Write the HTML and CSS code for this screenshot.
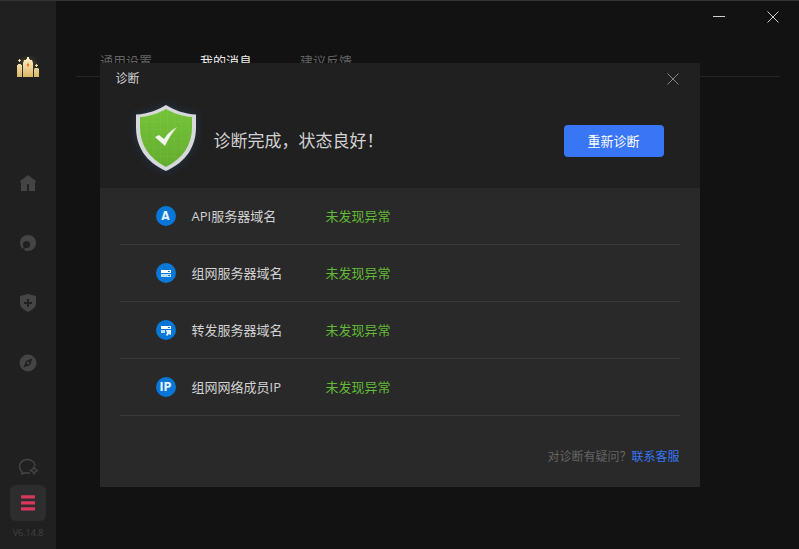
FILE: index.html
```html
<!DOCTYPE html>
<html lang="zh-CN">
<head>
<meta charset="utf-8">
<meta name="viewport" content="width=device-width, initial-scale=1">
<title>诊断</title>
<link rel="stylesheet" href="styles.css">
</head>
<body>
<div class="app">
  <nav class="sidebar" aria-label="主导航">
    <svg class="brand" viewBox="0 0 24 24" aria-hidden="true">
      <defs>
        <linearGradient id="wax" x1="0" y1="0" x2="0" y2="1"><stop offset="0" stop-color="#fff4cf"/><stop offset="1" stop-color="#d9b665"/></linearGradient>
        <radialGradient id="glow"><stop offset="0" stop-color="#a08a50" stop-opacity=".4"/><stop offset="1" stop-color="#a08a50" stop-opacity="0"/></radialGradient>
      </defs>
      <circle cx="12" cy="10" r="12" fill="url(#glow)"/>
      <path fill="url(#wax)" d="M7 21V7l1-3h2V3h1V1h2v2h1v1h2l1 3v14zM1 21V9h1V8h3v1h1v12zM18 21v-8l1-1h3l1 1v8z"/>
      <path fill="#e9d9a0" d="M3 3h1v1h1v1H4v1H3V5H2V4h1zM20 8h1v1h1v1h-1v1h-1v-1h-1V9h1z"/>
      <path fill="#f8cf7e" d="M12 5l1 3 2 1-2 1-1 3-1-3-2-1 2-1z"/>
      <path fill="#ef5c20" d="M12 7l1 2-1 2-1-2z"/>
    </svg>
    <div class="nav-group">
      <button type="button" aria-label="首页"><svg viewBox="0 0 20 20"><path fill="currentColor" d="M10 2l8 6v1h-1v9h-6v-7H9v7H3V9H2V8z"/></svg></button>
      <button type="button" aria-label="加速"><svg viewBox="0 0 20 20"><circle cx="10" cy="10" r="8" fill="currentColor"/><circle cx="8.500" cy="11.500" r="3.600" fill="#202020"/><path stroke="#202020" stroke-width="1.500" d="M7 13.500l-2.500 4.500"/></svg></button>
      <button type="button" aria-label="防护"><svg viewBox="0 0 20 20"><path fill="currentColor" fill-rule="evenodd" d="M10 1l8 2v7c0 4-3.500 7-8 9-4.500-2-8-5-8-9V3zM9 6v3H6v2h3v3h2v-3h3V9h-3V6z"/></svg></button>
      <button type="button" aria-label="发现"><svg viewBox="0 0 20 20"><path fill="currentColor" fill-rule="evenodd" d="M10 1.500a8.500 8.500 0 1 1 0 17 8.500 8.500 0 0 1 0-17zM14.500 5.500L8 8l-2.500 6.500L12 12zM10 8.700a1.300 1.300 0 1 1 0 2.600 1.300 1.300 0 0 1 0-2.600z"/></svg></button>
    </div>
    <div class="nav-end">
      <button type="button" class="chat" aria-label="客服"><svg viewBox="0 0 20 20" fill="none" stroke="currentColor" stroke-width="1.500"><path d="M17 9C17 5 13.500 2.500 9.500 2.500S1.500 5 1.500 9.500c0 2.500 1 4 2.500 5.500v2l2-1h6"/><path d="M16 10l1.200 2.300 2.300 1.200-2.300 1.200L16 17l-1.200-2.300-2.300-1.200 2.300-1.200z"/></svg></button>
      <button type="button" class="menu" aria-label="菜单"><svg viewBox="0 0 14 16"><path fill="currentColor" d="M0 .3h14v3.200H0zM0 6.300h14v3.200H0zM0 12.300h14v3.200H0z"/></svg></button>
      <span class="version">V6.14.8</span>
    </div>
  </nav>

  <main class="content">
    <header class="window-bar">
      <button type="button" aria-label="最小化"><svg viewBox="0 0 12 12"><path d="M0 5.500h12"/></svg></button>
      <button type="button" aria-label="关闭"><svg viewBox="0 0 12 12"><path d="M.5.5l11 11M11.500.5l-11 11"/></svg></button>
    </header>
    <div class="tabs" role="tablist">
      <button type="button" role="tab">通用设置</button>
      <button type="button" role="tab" aria-selected="true" class="active">我的消息</button>
      <button type="button" role="tab">建议反馈</button>
    </div>
  </main>
</div>

<div class="overlay">
  <section class="dialog" role="dialog" aria-labelledby="dialog-title">
    <header class="dialog-head">
      <div class="title-row">
        <h1 id="dialog-title">诊断</h1>
        <button type="button" class="dismiss" aria-label="关闭诊断"><svg viewBox="0 0 12 12"><path d="M.5.5l11 11M11.500.5l-11 11"/></svg></button>
      </div>
      <div class="summary">
        <svg class="shield" viewBox="0 0 60 66" aria-hidden="true">
          <defs>
            <linearGradient id="leaf" x1="0" y1="0" x2="0" y2="1"><stop offset="0" stop-color="#76c53a"/><stop offset="1" stop-color="#62ab2c"/></linearGradient>
            <clipPath id="inner"><path d="M30 4C23 8 14 11.500 4 12v10c0 18 9 31 26 40 17-9 26-22 26-40V12C46 11.500 37 8 30 4z"/></clipPath>
          </defs>
          <path fill="#d6d8da" d="M30 0C22 5 12 9 0 9.500V22c0 20 10 35 30 44 20-9 30-24 30-44V9.500C48 9 38 5 30 0z"/>
          <g clip-path="url(#inner)">
            <path fill="url(#leaf)" d="M0 0h60v66H0z"/>
            <path stroke="#fff" stroke-opacity=".04" d="M10.500 0v66M17.500 0v66M24.500 0v66M31.500 0v66M38.500 0v66M45.500 0v66M52.500 0v66M0 16.500h60M0 24.500h60M0 33.500h60M0 42.500h60M0 51.500h60"/>
          </g>
          <path fill="#f2f4ee" d="M19 32l4-2 5 4c4-6 8-9 13-12-5 6-9 12-12 19z"/>
        </svg>
        <p>诊断完成，状态良好！</p>
        <button type="button" class="retry">重新诊断</button>
      </div>
    </header>

    <ul class="checks">
      <li><span class="badge" aria-hidden="true">A</span><span class="name">API服务器域名</span><span class="status">未发现异常</span></li>
      <li>
        <span class="badge" aria-hidden="true"><svg viewBox="0 0 20 20"><path fill="#fff" fill-rule="evenodd" d="M5 7h10v3H5zM12 8v1h2V8z"/><path fill="#bddcf5" fill-rule="evenodd" d="M5 11h10v3H5zM12 12v1h2v-1z"/></svg></span>
        <span class="name">组网服务器域名</span><span class="status">未发现异常</span>
      </li>
      <li>
        <span class="badge" aria-hidden="true"><svg viewBox="0 0 20 20"><path fill="#fff" fill-rule="evenodd" d="M5 6h10v3H5zM12 7v1h2V7z"/><path fill="#bddcf5" d="M5 10h4v3H5z"/><path fill="#e3f1fc" d="M10 10h5v5l-2-1-2 2-1-1 1-2z"/></svg></span>
        <span class="name">转发服务器域名</span><span class="status">未发现异常</span>
      </li>
      <li><span class="badge" aria-hidden="true">IP</span><span class="name">组网网络成员IP</span><span class="status">未发现异常</span></li>
    </ul>

    <footer class="help">对诊断有疑问？<a href="#support">联系客服</a></footer>
  </section>
</div>
</body>
</html>
```

FILE: styles.css
```css
* { box-sizing: border-box; }

body {
  margin: 0;
  background: #121212;
  color: #d2d2d2;
  font: 13px/20px "Open Sans", "Noto Sans CJK SC", sans-serif;
}

button {
  display: grid;
  place-items: center;
  padding: 0;
  border: 0;
  background: none;
  color: inherit;
  font: inherit;
  cursor: pointer;
}

h1, p, ul { margin: 0; padding: 0; font-weight: 400; }
svg { display: block; }

.app {
  display: flex;
  min-height: 100vh;
  border-top: 1px solid #333535;
}

/* Sidebar */
.sidebar {
  display: flex;
  flex-direction: column;
  align-items: center;
  width: 56px;
  padding: 55px 0 8px;
  background: #202020;
  color: #444;
}

.brand { width: 24px; height: 24px; }

.nav-group {
  display: grid;
  gap: 40px;
  margin-top: 93px;
}

.nav-group svg, .chat svg { width: 20px; height: 20px; }

.nav-end {
  display: flex;
  flex-direction: column;
  align-items: center;
  margin-top: auto;
}

.menu {
  width: 36px;
  height: 36px;
  margin-top: 8px;
  border-radius: 6px;
  background: #2d2d2d;
  color: #d9365e;
}

.menu svg { width: 14px; height: 16px; }

.version {
  margin-top: 4px;
  color: #404040;
  font-size: 9px;
  line-height: 16px;
}

/* Window behind the dialog */
.content { flex: 1; padding: 0 19px 0 20px; }

.window-bar {
  display: flex;
  justify-content: flex-end;
  gap: 42px;
  height: 50px;
  padding: 10px 1px 0;
  color: #cfcfcf;
}

.window-bar button, .dismiss { height: 12px; width: 12px; }
.window-bar svg, .dismiss svg {
  width: 12px;
  height: 12px;
  fill: none;
  stroke: currentColor;
}

.tabs {
  display: flex;
  gap: 48px;
  padding: 0 24px 5px;
  border-bottom: 1px solid #252525;
  color: #636363;
}

.tabs .active { color: #ececec; }

/* Dialog */
.overlay {
  position: absolute;
  inset: 0;
  display: grid;
  align-content: center;
  justify-items: center;
  padding: 1px 16px 0;
}

.dialog {
  width: 100%;
  max-width: 600px;
  background: #292929;
}

.dialog-head { padding-bottom: 11px; background: #202020; }

.title-row {
  display: flex;
  align-items: center;
  justify-content: space-between;
  height: 32px;
  padding: 0 21px 0 16px;
}

.title-row h1 { font-size: 12px; }
.dismiss { color: #858585; }

.summary {
  display: flex;
  align-items: center;
  min-height: 72px;
  margin-top: 10px;
  padding: 0 36px;
}

.shield {
  align-self: flex-start;
  width: 60px;
  height: 66px;
  filter: drop-shadow(0 0 4px #24364d);
}

.summary p {
  flex: 1;
  margin-left: 18px;
  font-size: 17px;
  line-height: 24px;
}

.retry {
  width: 100px;
  height: 32px;
  border-radius: 4px;
  background: #3876f6;
  color: #fff;
}

.checks { padding: 0 20px; list-style: none; }

.checks li {
  display: grid;
  grid-template-columns: 20px 118px 1fr;
  column-gap: 16px;
  align-items: center;
  height: 57px;
  padding-left: 36px;
  border-bottom: 1px solid #3a3a3a;
}

.badge {
  display: grid;
  place-items: center;
  width: 20px;
  height: 20px;
  border-radius: 50%;
  background: #0878d8;
  color: #e4f1fd;
  font: 700 12px/20px "DejaVu Sans Condensed", Roboto, sans-serif;
}

.badge svg { width: 20px; height: 20px; }
.status { color: #62ba36; }

.help {
  padding: 31px 20px 20px;
  color: #656565;
  font-size: 12px;
  text-align: right;
}

.help a { color: #3876f6; text-decoration: none; }
```
